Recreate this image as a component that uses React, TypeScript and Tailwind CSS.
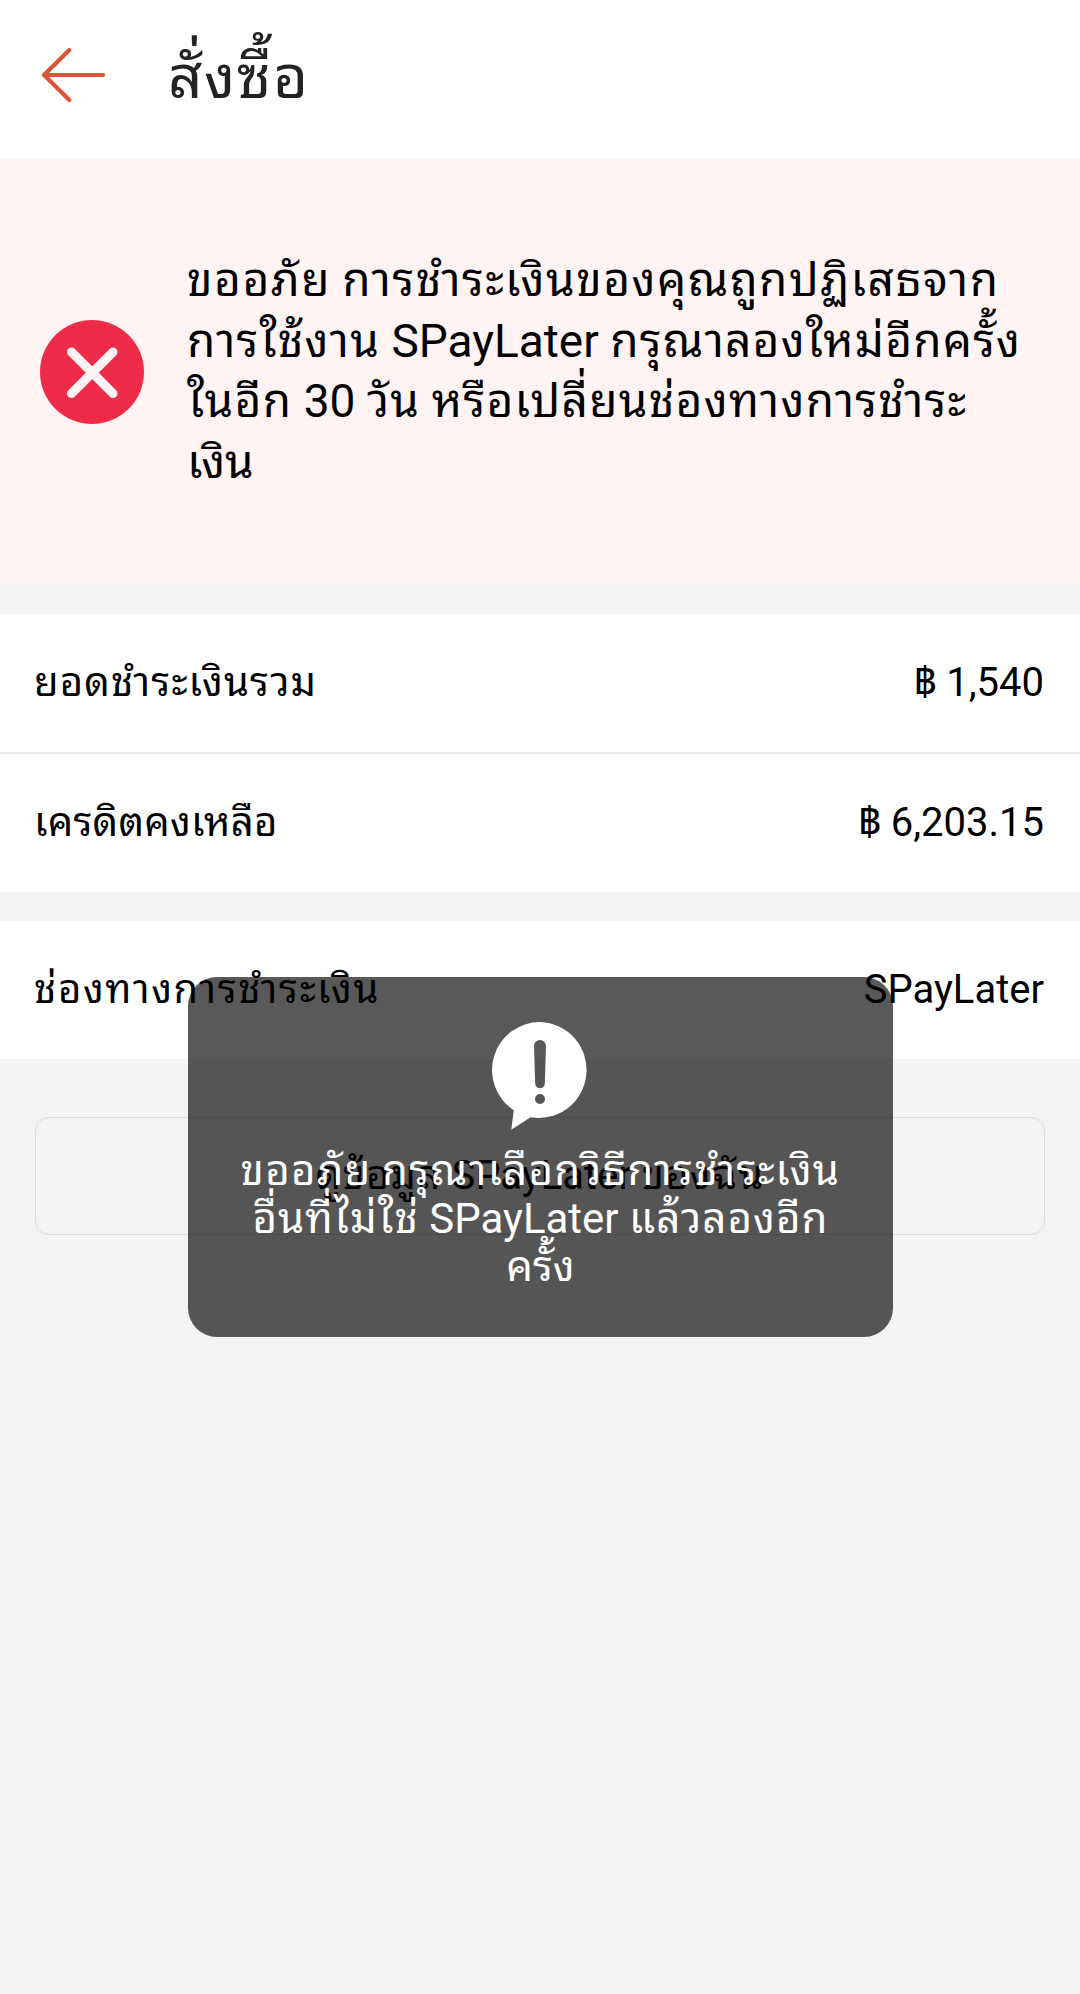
import React from 'react';

type InfoRowProps = {
  label: string;
  tracking: string;
  value: string;
};

type TextLine = {
  text: string;
  tracking: string;
};

const errorLines: TextLine[] = [
  { text: 'ขออภัย การชำระเงินของคุณถูกปฏิเสธจาก', tracking: 'tracking-[1.5px]' },
  { text: 'การใช้งาน SPayLater กรุณาลองใหม่อีกครั้ง', tracking: 'tracking-[1.2px]' },
  { text: 'ในอีก 30 วัน หรือเปลี่ยนช่องทางการชำระ', tracking: 'tracking-[1.3px]' },
  { text: 'เงิน', tracking: 'tracking-normal' },
];

const toastLines: TextLine[] = [
  { text: 'ขออภัย กรุณาเลือกวิธีการชำระเงิน', tracking: 'tracking-[1.3px]' },
  { text: 'อื่นที่ไม่ใช่ SPayLater แล้วลองอีก', tracking: 'tracking-[1.1px]' },
  { text: 'ครั้ง', tracking: 'tracking-normal' },
];

// Latin words, numbers and spaces keep their normal spacing inside a tracked Thai line
const Thai: React.FC<TextLine> = ({ text, tracking }) => (
  <span className={tracking}>
    {text.split(/( SPayLater | 30 | )/).map((part, index) =>
      index % 2 === 1 ? (
        <span key={index} className="tracking-normal">{part}</span>
      ) : (
        part
      )
    )}
  </span>
);

const InfoRow: React.FC<InfoRowProps> = ({ label, tracking, value }) => (
  <div className="flex h-[138px] items-center justify-between bg-white pr-[36px] pl-[34px] text-[40px] leading-[48px] whitespace-nowrap">
    <Thai text={label} tracking={tracking} />
    <span>{value}</span>
  </div>
);

const App = () => {
  return (
    <div className="relative h-[1994px] w-[1080px] overflow-hidden bg-[#f4f4f4] font-[Roboto,'Noto_Sans_Thai_Looped',sans-serif] text-black">
      <header className="flex h-[159px] items-center bg-white pl-[41px]">
        <svg className="mb-[9px] h-[56px] w-[66px]" viewBox="0 0 66 56" fill="none" stroke="#dc5437" strokeWidth="4.2" strokeLinecap="round" strokeLinejoin="round">
          <path d="M28.3 3.1 3 28l25.3 25M3 28h59" />
        </svg>
        <h1 className="mb-[3px] ml-[61px] text-[60px] leading-[72px] tracking-[1.6px] text-[#222]">สั่งซื้อ</h1>
      </header>

      <section className="flex h-[426px] items-center bg-[#fff4f3] pl-[40px]">
        <svg className="h-[104px] w-[104px] shrink-0" viewBox="0 0 104 104">
          <circle cx="52" cy="52" r="52" fill="#ee2c4a" />
          <path d="M31.5 32 73 73.5M73 32 31.5 73.5" stroke="#fff4f3" strokeWidth="9" strokeLinecap="round" />
        </svg>
        <div className="mb-[2px] ml-[43px] text-[46px] leading-[60.5px] whitespace-nowrap">
          {errorLines.map((line) => (
            <p key={line.text}>
              <Thai {...line} />
            </p>
          ))}
        </div>
      </section>

      <section className="mt-[29px]">
        <InfoRow label="ยอดชำระเงินรวม" tracking="tracking-[1.2px]" value="฿ 1,540" />
        <div className="h-[2px] bg-[#e8e8e8]" />
        <InfoRow label="เครดิตคงเหลือ" tracking="tracking-[0.3px]" value="฿ 6,203.15" />
      </section>

      <section className="mt-[29px]">
        <InfoRow label="ช่องทางการชำระเงิน" tracking="tracking-[1.65px]" value="SPayLater" />
      </section>

      <button className="mx-[35px] mt-[58px] flex h-[118px] w-[1010px] items-center justify-center rounded-[14px] border border-[#dcdcdc] text-[40px] leading-[48px] whitespace-nowrap">
        <Thai text="ดูข้อมูล SPayLater ของฉัน" tracking="tracking-[1.3px]" />
      </button>

      {/* Toast */}
      <div className="absolute top-[977px] left-[188px] flex h-[360px] w-[705px] flex-col items-center rounded-[29px] bg-black/65 pt-[45px] text-white">
        <svg className="mr-px h-[108px] w-[96px] shrink-0" viewBox="0 0 96 108">
          <path
            fill="#fff"
            fillRule="evenodd"
            d="M48 0a48 48 0 1 1-9.5 95.3L19.3 107.7 21.8 88.2A48 48 0 0 1 48 0ZM48 18a6 6 0 0 0-6 6l1.2 37.5a4.8 4.8 0 0 0 9.6 0L54 24a6 6 0 0 0-6-6ZM48 72a5 5 0 1 0 0 10a5 5 0 1 0 0-10Z"
          />
        </svg>
        <div className="mt-[17px] text-center text-[42px] leading-[48px] whitespace-nowrap">
          {toastLines.map((line) => (
            <p key={line.text}>
              <Thai {...line} />
            </p>
          ))}
        </div>
      </div>
    </div>
  );
};

export default App;
